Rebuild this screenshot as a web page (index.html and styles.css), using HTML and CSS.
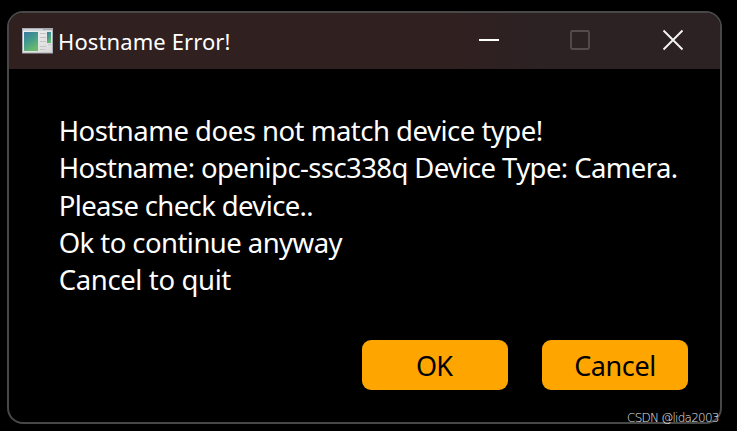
FILE: index.html
```html
<!DOCTYPE html>
<html lang="en">
<head>
<meta charset="utf-8">
<title>Hostname Error!</title>
<link rel="stylesheet" href="styles.css">
</head>
<body>
<main class="dialog">
  <header class="titlebar">
    <svg class="app-icon" width="31" height="26" viewBox="0 0 31 26" aria-hidden="true">
      <defs>
        <linearGradient id="pane" x1="0" y1="0" x2="0.5" y2="1"><stop offset="0" stop-color="#3c78a0"/><stop offset="0.55" stop-color="#459d8b"/><stop offset="1" stop-color="#69ba6f"/></linearGradient>
        <linearGradient id="frame" x1="0" y1="0" x2="1" y2="1"><stop offset="0" stop-color="#f5f5f5"/><stop offset="1" stop-color="#d8d8d8"/></linearGradient>
      </defs>
      <rect x="0.5" y="0.5" width="30" height="24.5" fill="url(#frame)" stroke="#a9adb3"/>
      <path d="M1 1h29v2H1z" fill="#d3d7dd"/>
      <path d="M21 1h9v1h-9z" fill="#a2a7ad"/>
      <path d="M2 4h14v19H2z" fill="url(#pane)"/>
      <path d="M18 5.500h6M18 9.500h6M18 13.500h6M18 18.500h6M18 21.500h5" stroke="#c4c4c4"/>
      <path d="M25 4h4v11h-4z" fill="url(#pane)"/>
      <path d="M26 16.500h3" stroke="#c4c4c4"/>
    </svg>
    <h1 class="title">Hostname Error!</h1>
    <svg class="control" width="22" height="22" viewBox="0 0 22 22"><path d="M1 11h20" stroke="#fff" stroke-width="2"/></svg>
    <svg class="control control-maximize" width="22" height="22" viewBox="0 0 22 22"><rect x="2" y="2" width="18" height="18" rx="1.500" fill="none" stroke="#564b4c" stroke-width="1.900"/></svg>
    <svg class="control" width="22" height="22" viewBox="0 0 22 22"><path d="M1.500 1.500l19 19M20.500 1.500l-19 19" stroke="#f5f3f3" stroke-width="1.900"/></svg>
  </header>
  <section class="message">
    <p class="line-mismatch">Hostname does not match device type!</p>
    <p class="line-details">Hostname: openipc-ssc338q Device Type: Camera.</p>
    <p class="line-check">Please check device..</p>
    <p class="line-ok">Ok to continue anyway</p>
    <p class="line-cancel">Cancel to quit</p>
  </section>
  <footer class="actions">
    <button class="button button-ok">OK</button>
    <button class="button">Cancel</button>
  </footer>
</main>
<div class="credit">CSDN @lida2003</div>
</body>
</html>
```
FILE: styles.css
```css
* { box-sizing: border-box; }
body {
  margin: 0;
  height: 431px;
  padding: 11px 15px 7px 7px;
  overflow: hidden;
  background: #000;
  color: #fff;
  font-family: "Noto Sans", sans-serif;
}
.dialog {
  display: flex;
  flex-direction: column;
  height: 413px;
  border: 2px solid #484848;
  border-radius: 16px;
  overflow: hidden;
}
.titlebar {
  display: flex;
  align-items: center;
  height: 56px;
  padding: 0 36px 0 13px;
  background: linear-gradient(90deg, #302020 0 63%, #2c2224 76%);
}
.title {
  flex: 1;
  margin: 0 0 0 5px;
  font-size: 22px;
  font-weight: 400;
  letter-spacing: 0.1px;
}
.control { margin-bottom: 2px; }
.control + .control { margin-left: 71px; }
.control + .control-maximize { margin-left: 69px; }
.message {
  flex: 1;
  padding: 43.1px 0 0 49.7px;
  font-size: 27.5px;
  line-height: 37.3px;
  white-space: nowrap;
}
.message p { margin: 0; }
.line-mismatch { letter-spacing: -0.5px; }
.line-details { letter-spacing: -0.6px; }
.line-check { letter-spacing: -0.63px; }
.line-ok { letter-spacing: -0.56px; }
.line-cancel { letter-spacing: -0.37px; }
.actions {
  display: flex;
  justify-content: flex-end;
  gap: 34px;
  padding: 0 32px 32px 0;
}
.button {
  width: 146px;
  height: 50px;
  padding: 0;
  border: 0;
  border-radius: 9px;
  background: #ffa500;
  color: #000;
  font: 27px "Noto Sans", sans-serif;
  letter-spacing: -0.4px;
}
.button-ok { padding-right: 2px; letter-spacing: -0.8px; }
.credit {
  position: absolute;
  left: 627px;
  top: 410px;
  color: #e4e4e4;
  font: 200 12px/16px "DejaVu Sans", sans-serif;
  letter-spacing: -0.75px;
  white-space: nowrap;
}
```
